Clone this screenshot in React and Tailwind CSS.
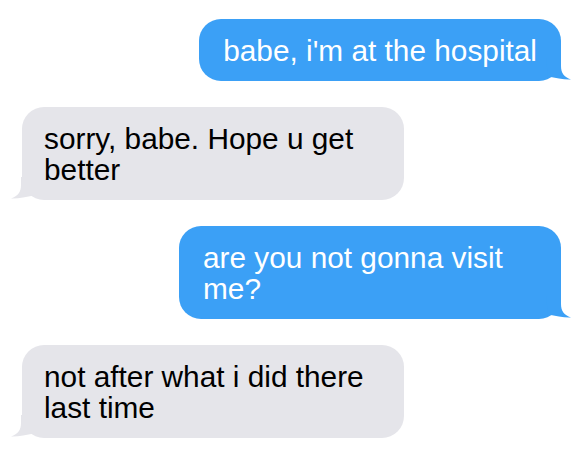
function Tail({ side, color }) {
  return (
    <svg
      width="26"
      height="24"
      viewBox="0 0 26 24"
      className={`absolute bottom-[-1px] ${
        side === "right" ? "right-[-11px]" : "left-[-12px] -scale-x-100"
      }`}
    >
      <path
        d="M0,0 H15 V8 C15,15 18,19 25,21.5 C19,22 10,20 2,18.5 L0,0 Z"
        fill={color}
      />
    </svg>
  );
}

function Bubble({ me, children }) {
  const color = me ? "#3ba0f6" : "#e5e5ea";
  return (
    <div
      className={`relative w-fit max-w-[382px] rounded-[22px] py-[15.5px] text-[29.8px] leading-[31px] ${
        me
          ? "self-end bg-[#3ba0f6] px-6 text-white"
          : "self-start bg-[#e5e5ea] pl-[22px] pr-6 text-black"
      }`}
    >
      <span className="relative z-10">{children}</span>
      <Tail side={me ? "right" : "left"} color={color} />
    </div>
  );
}

export default function App() {
  const messages = [
    { me: true, text: "babe, i'm at the hospital" },
    { me: false, text: "sorry, babe. Hope u get better" },
    { me: true, text: "are you not gonna visit me?" },
    { me: false, text: "not after what i did there last time" },
  ];

  return (
    <div
      className="flex h-[455px] w-[573px] flex-col gap-[26px] bg-white pl-[22px] pr-[12px] pt-[19px]"
      style={{ fontFamily: '"Liberation Sans", Arial, sans-serif' }}
    >
      {messages.map((m, i) => (
        <Bubble key={i} me={m.me}>
          {m.text}
        </Bubble>
      ))}
    </div>
  );
}
